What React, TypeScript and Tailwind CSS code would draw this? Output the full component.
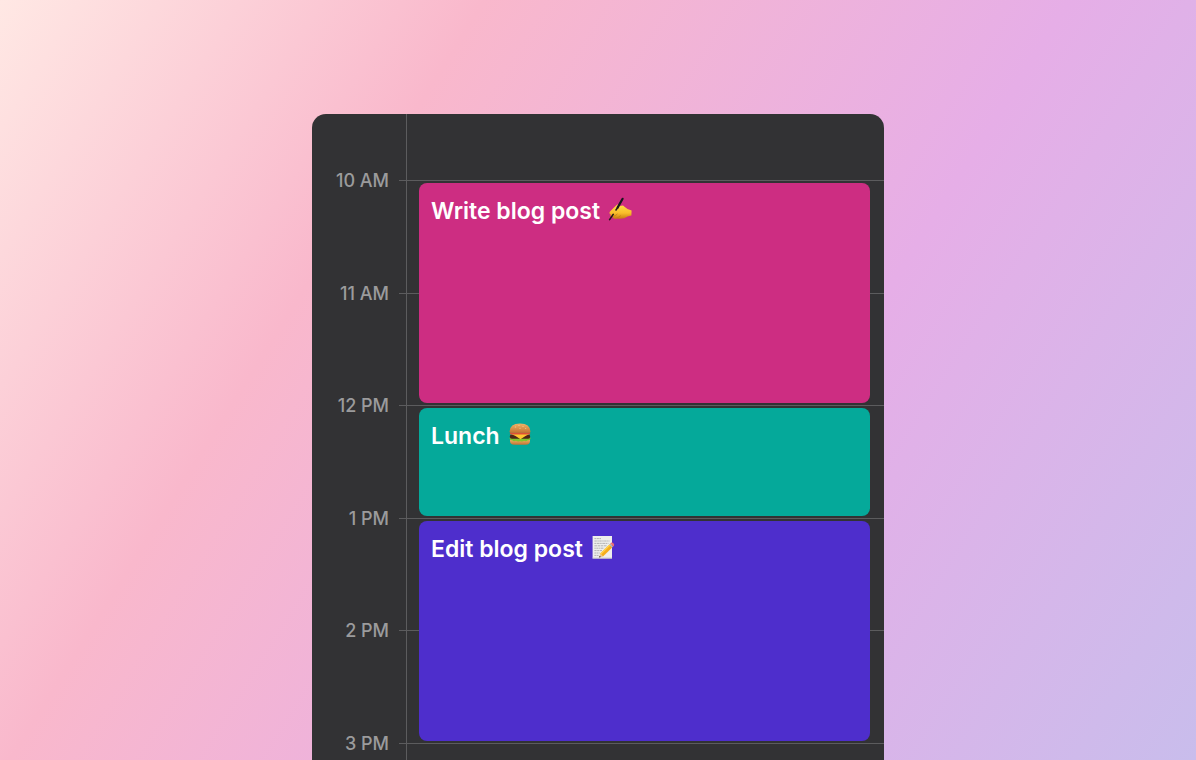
import type { ReactNode } from "react";

interface CalendarEvent {
  title: string;
  icon: ReactNode;
  className: string;
}

const WritingHand = () => (
  <svg viewBox="0 0 24 24" className="h-6 w-6" aria-hidden="true">
    <defs>
      <linearGradient id="hand" x1="0" y1="0" x2="0" y2="1">
        <stop offset="0" stopColor="#ffdf45" />
        <stop offset="0.6" stopColor="#f9bd2b" />
        <stop offset="1" stopColor="#c87a12" />
      </linearGradient>
    </defs>
    <path
      d="M2 14.5 L5.5 11 L9 7.8 Q10.6 6.8 11.6 8.2 L12.4 9 Q15 7.8 16.5 9.8 L19.5 12 L23.6 13.4 L23.4 18.6 L19.5 19.4 Q16.5 22 11.5 21.8 L6.5 21.6 Q4.4 21.4 4.8 19.6 Q1.8 19.4 2.6 17.4 Q.6 16.4 2 14.5Z"
      fill="url(#hand)"
    />
    <path
      d="M4.8 19.4 Q7.6 19.2 9.2 17.2 M6.8 21.4 Q11 20.8 12.6 18.8"
      fill="none"
      stroke="#c98312"
      strokeWidth="0.8"
      strokeLinecap="round"
    />
    <path d="M14.6 1.8 L9.6 10.6" stroke="#17171a" strokeWidth="2.2" strokeLinecap="round" />
    <path d="M5.2 17.4 L1.6 22.6" stroke="#201a18" strokeWidth="1.6" strokeLinecap="round" />
    <path d="M9.6 10.6 L8 13" stroke="#201a18" strokeWidth="1.6" strokeLinecap="round" />
  </svg>
);

const Burger = () => (
  <svg viewBox="0 0 24 24" className="h-6 w-6" aria-hidden="true">
    <defs>
      <linearGradient id="bun" x1="0" y1="0" x2="0" y2="1">
        <stop offset="0" stopColor="#eeb367" />
        <stop offset="1" stopColor="#c37432" />
      </linearGradient>
    </defs>
    <path d="M2 17.5 H22 V19 Q22 22.8 17.5 22.8 H6.5 Q2 22.8 2 19Z" fill="url(#bun)" />
    <path
      d="M1.6 16.8 Q1.4 14.8 3.5 15 H20.5 Q22.8 14.8 22.5 16.8 Q21.6 18.8 19.8 18.2 Q18 19.8 16 18.8 Q14 20.2 12 19 Q10 20.2 8 18.8 Q5.6 19.8 4.2 18.2 Q2 18.6 1.6 16.8Z"
      fill="#80c52c"
    />
    <rect x="1.8" y="12.6" width="20.4" height="4.2" rx="2.1" fill="#4c2617" />
    <path d="M3 12 H21.4 L17.5 14 L12.5 17.2 L7.5 14Z" fill="#ffc72e" />
    <rect x="1.8" y="10.2" width="20.4" height="2.3" rx="1.1" fill="#dc5138" />
    <path d="M1.6 9.5 Q1.8 1.4 12 1.4 Q22.2 1.4 22.4 9.5 Q22.4 10.8 21 10.8 H3 Q1.6 10.8 1.6 9.5Z" fill="url(#bun)" />
    <g fill="#f8d99c">
      <ellipse cx="7.5" cy="5" rx="0.8" ry="0.4" />
      <ellipse cx="11" cy="3.4" rx="0.8" ry="0.4" />
      <ellipse cx="15" cy="4.6" rx="0.8" ry="0.4" />
      <ellipse cx="12" cy="6.2" rx="0.8" ry="0.4" />
      <ellipse cx="17.6" cy="6.6" rx="0.8" ry="0.4" />
    </g>
  </svg>
);

const Memo = () => (
  <svg viewBox="0 0 24 24" className="h-6 w-6" aria-hidden="true">
    <path d="M1.6 1 H21 V23.4 H1.6Z" fill="#eeeeec" />
    <path d="M1.6 22.6 H21 V23.6 H1.6Z" fill="#c9c9c9" />
    <g fill="none" stroke="#a3a3a6" strokeWidth="0.8">
      <path d="M3.4 3.6 H10" strokeDasharray="2 0.5" />
      <path d="M3.4 6 H18.6" strokeDasharray="2.4 0.6 1.4 0.5" />
      <path d="M3.4 8.4 H17.4" strokeDasharray="1.6 0.6 3 0.5" />
      <path d="M3.4 10.8 H15.6" strokeDasharray="2.6 0.6" />
      <path d="M3.4 13.2 H13.2" strokeDasharray="1.4 0.5 2.2 0.6" />
      <path d="M3.4 15.6 H11" strokeDasharray="2.2 0.6" />
      <path d="M3.4 18 H8.6" strokeDasharray="1.8 0.5" />
      <path d="M3.4 20.4 H7.6" strokeDasharray="2 0.5" />
    </g>
    <path d="M8.2 22.4 L9.2 18.4 L12 21.4Z" fill="#e9c48f" />
    <path d="M8.2 22.4 L8.6 20.8 L9.8 22Z" fill="#2c2622" />
    <path d="M9.2 18.4 L18.4 9.4 L21.2 12.4 L12 21.4Z" fill="#f5ac1c" />
    <path d="M9.2 18.4 L18.4 9.4 L19.3 10.4 L10.1 19.4Z" fill="#ffd24a" />
    <path d="M18.2 9.6 L19.3 8.5 L22.2 11.5 L21 12.6Z" fill="#a9b3b5" />
    <path d="M19.3 8.5 L20 7.8 Q21.2 7 22.4 8.2 Q23.8 9.8 22.8 10.9 L22.2 11.5Z" fill="#ee7077" />
  </svg>
);

const events: CalendarEvent[] = [
  {
    title: "Write blog post",
    icon: <WritingHand />,
    className: "row-start-2 row-span-2 bg-[#cd2d82]",
  },
  {
    title: "Lunch",
    icon: <Burger />,
    className: "row-start-4 bg-[#05a99a]",
  },
  {
    title: "Edit blog post",
    icon: <Memo />,
    className: "row-start-5 row-span-2 bg-[#4e2ecc]",
  },
];

const hours = [
  { label: "10 AM", row: "row-start-2" },
  { label: "11 AM", row: "row-start-3" },
  { label: "12 PM", row: "row-start-4" },
  { label: "1 PM", row: "row-start-5" },
  { label: "2 PM", row: "row-start-6" },
  { label: "3 PM", row: "row-start-7" },
];

const HourRow = ({ label, row }: { label: string; row: string }) => (
  <div className={`col-start-1 col-span-2 flex items-start ${row}`}>
    <time className="-mt-[11px] w-[77px] text-right text-lg leading-6 font-medium text-[#9b9b9c]">
      {label}
    </time>
    <div className="ml-[10px] h-px flex-1 bg-[#5c5c5e]" />
  </div>
);

const EventCard = ({ title, icon, className }: CalendarEvent) => (
  <article
    className={`col-start-2 mt-[3px] mr-[14px] mb-[2px] ml-[13px] rounded-lg p-3 ${className}`}
  >
    <h3 className="flex items-start gap-2 text-[23px] leading-8 font-semibold text-white">
      {title}
      <span className="mt-[2px]">{icon}</span>
    </h3>
  </article>
);

export default function App() {
  return (
    <main className="flex min-h-screen flex-col items-center bg-[linear-gradient(122deg,#ffe8e4_0%,#f9b8cc_29%,#e6aee7_64%,#c9bdec_100%)] pt-[114px] font-['Inter',sans-serif]">
      <section
        aria-label="Day schedule"
        className="grid w-full max-w-[572px] flex-1 grid-cols-[94px_1fr] grid-rows-[66px_repeat(5,minmax(96px,1fr))_17px] overflow-hidden rounded-t-[14px] bg-[#323234]"
      >
        <div className="col-start-2 row-start-1 row-span-7 border-l border-[#5c5c5e]" />
        {hours.map((hour) => (
          <HourRow key={hour.label} {...hour} />
        ))}
        {events.map((event) => (
          <EventCard key={event.title} {...event} />
        ))}
      </section>
    </main>
  );
}
